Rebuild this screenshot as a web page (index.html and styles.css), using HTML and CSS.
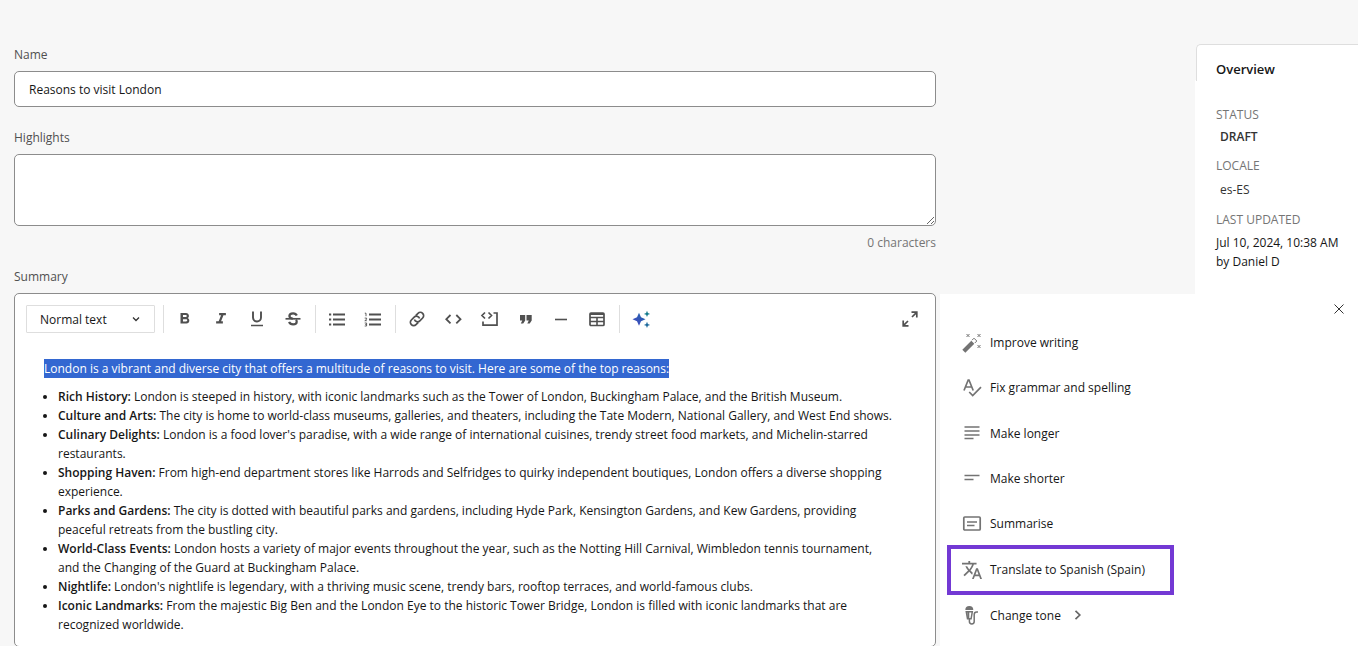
FILE: index.html
```html
<!DOCTYPE html>
<html lang="en">
<head>
<meta charset="utf-8">
<title>Reasons to visit London</title>
<link rel="stylesheet" href="styles.css">
</head>
<body>
<div class="page">
  <form class="form">
    <label class="label" for="name">Name</label>
    <input class="input" id="name" type="text" value="Reasons to visit London">
    <label class="label label-spaced" for="highlights">Highlights</label>
    <textarea class="input textarea" id="highlights"></textarea>
    <p class="counter">0 characters</p>
    <h2 class="label">Summary</h2>
    <section class="editor" aria-label="Summary">
      <div class="toolbar">
        <div class="style-picker">
          <select class="style-select" aria-label="Text style"><option>Normal text</option></select>
          <svg class="chevron" viewBox="0 0 10 10"><path d="M2 3.5l3 3 3-3"/></svg>
        </div>
        <span class="divider divider-first"></span>
        <button class="tool" type="button" aria-label="Bold"><svg class="glyph" viewBox="0 0 24 24"><path d="M15.6 10.79c.97-.67 1.65-1.77 1.65-2.79 0-2.26-1.75-4-4-4H6v14h8.04c2.09 0 3.710-1.700 3.710-3.790 0-1.520-.86-2.820-2.150-3.420zM9.300 6.800h3.700c.83 0 1.300.57 1.300 1.300s-.57 1.300-1.300 1.300H9.300zm4.200 8.500H9.300v-3h4.200c.83 0 1.500.67 1.500 1.500s-.67 1.500-1.500 1.500z"/></svg></button>
        <button class="tool" type="button" aria-label="Italic"><svg class="glyph" viewBox="0 0 24 24"><path d="M9.500 4v3h2.600l-3.200 8H5.500v3h9v-3h-2.400l3.200-8h3.200V4z"/></svg></button>
        <button class="tool" type="button" aria-label="Underline"><svg class="line" viewBox="0 0 18 18"><path d="M5 1.500v6a4 4 0 0 0 8 0v-6" stroke-width="1.900"/><path d="M3 15.500h12" stroke-width="1.500"/></svg></button>
        <button class="tool" type="button" aria-label="Strikethrough"><svg class="line" viewBox="0 0 18 18"><path d="M12.800 5.500C12.200 4 10.800 3.300 9.100 3.300c-2.200 0-3.700 1.100-3.700 2.700 0 1.300 1 2.200 3.500 2.800M12 9.800c.5.600.7 1.200.7 1.900 0 1.600-1.500 2.700-3.600 2.700-1.900 0-3.400-.9-4-2.500" stroke-width="2.200"/><path d="M1.500 8.800h15" stroke-width="1.700"/></svg></button>
        <span class="divider"></span>
        <button class="tool" type="button" aria-label="Bulleted list"><svg class="line" viewBox="0 0 18 18"><path d="M5 4.500h12M5 9.500h12M5 14.500h12" stroke-width="1.800"/><path d="M1 4.500h2.200M1 9.500h2.200M1 14.500h2.200" stroke-width="2.200"/></svg></button>
        <button class="tool" type="button" aria-label="Numbered list"><svg class="line" viewBox="0 0 18 18"><path d="M5 4.500h12M5 9.500h12M5 14.500h12" stroke-width="1.800"/><path d="M.8 3.200H2v3M.7 8.100h1.900v1.200L.8 10.700h2M.7 13h1.900v3H.7M1.300 14.500h1.200" stroke-width=".9"/></svg></button>
        <span class="divider"></span>
        <button class="tool" type="button" aria-label="Link"><svg class="line" viewBox="0 0 18 18"><g transform="rotate(-45 9 9)" stroke-width="1.700"><path d="M7.500 12.300H4.300a3.300 3.300 0 0 1 0-6.600h4a3.300 3.300 0 0 1 2.900 4.800"/><path d="M10.500 5.700h3.200a3.300 3.300 0 0 1 0 6.600h-4a3.300 3.300 0 0 1-2.900-4.800"/></g></svg></button>
        <button class="tool" type="button" aria-label="Inline code"><svg class="line" viewBox="0 0 18 18"><path d="M6.500 5L2.300 9.200l4.200 4.200M12.300 5l4.200 4.200-4.200 4.200" stroke-width="1.800"/></svg></button>
        <button class="tool" type="button" aria-label="Code block"><svg class="line" viewBox="0 0 18 18"><path d="M5 2.500L2 5.500l3 3M8.500 2.500l3 3-3 3M13.500 3H17v12.200H3v-3.700" stroke-width="1.700"/></svg></button>
        <button class="tool" type="button" aria-label="Quote"><svg class="glyph" viewBox="0 0 18 18"><path d="M4 5h5.200v5.500L7.200 13.600H4.800l1.500-3.100H4zM10.500 5h5.200v5.500l-2 3.100h-2.400l1.500-3.100h-2.300z"/></svg></button>
        <button class="tool" type="button" aria-label="Horizontal rule"><svg class="line" viewBox="0 0 18 18"><path d="M3 9.500h12" stroke-width="1.600"/></svg></button>
        <button class="tool" type="button" aria-label="Table"><svg class="line" viewBox="0 0 18 18"><rect x="2" y="3" width="14" height="12.500" rx="1" stroke-width="1.700"/><path d="M2 7.500h14M2 11.500h14M9 7.500v8" stroke-width="1.600"/><path d="M2 4h14" stroke-width="2"/></svg></button>
        <span class="divider"></span>
        <button class="tool" type="button" aria-label="AI assistant"><svg class="sparkle" viewBox="0 0 18 18"><defs><linearGradient id="spark" x1="0" y1="1" x2="1" y2="0"><stop offset="0" stop-color="#4a46c4"/><stop offset="1" stop-color="#1b66aa"/></linearGradient></defs><path fill="url(#spark)" d="M7 2.800l2 4.500 4.500 2-4.500 2-2 4.500-2-4.500-4.500-2 4.500-2z"/><path fill="#127b8c" d="M15 .8l.9 2.200 2.200.9-2.200.9-.9 2.200-.9-2.200-2.200-.9 2.200-.9z"/><path fill="#1d6a9c" d="M15 11.800l.9 2.200 2.200.9-2.200.9-.9 2.200-.9-2.200-2.200-.9 2.200-.9z"/></svg></button>
        <button class="tool tool-end" type="button" aria-label="Expand"><svg class="line" viewBox="0 0 18 18"><path d="M11 7l4.700-4.700M10.500 2.200h5.300v5.300M7 11l-4.700 4.700M2.200 10.500v5.300h5.300" stroke-width="1.700"/></svg></button>
      </div>
      <div class="content">
        <p class="intro"><mark class="selection">London is a vibrant and diverse city that offers a multitude of reasons to visit. Here are some of the top reasons:</mark></p>
        <ul class="reasons">
          <li><strong>Rich History:</strong> London is steeped in history, with iconic landmarks such as the Tower of London, Buckingham Palace, and the British Museum.</li>
          <li><strong>Culture and Arts:</strong> The city is home to world-class museums, galleries, and theaters, including the Tate Modern, National Gallery, and West End shows.</li>
          <li><strong>Culinary Delights:</strong> London is a food lover's paradise, with a wide range of international cuisines, trendy street food markets, and Michelin-starred restaurants.</li>
          <li><strong>Shopping Haven:</strong> From high-end department stores like Harrods and Selfridges to quirky independent boutiques, London offers a diverse shopping experience.</li>
          <li><strong>Parks and Gardens:</strong> The city is dotted with beautiful parks and gardens, including Hyde Park, Kensington Gardens, and Kew Gardens, providing peaceful retreats from the bustling city.</li>
          <li><strong>World-Class Events:</strong> London hosts a variety of major events throughout the year, such as the Notting Hill Carnival, Wimbledon tennis tournament, and the Changing of the Guard at Buckingham Palace.</li>
          <li><strong>Nightlife:</strong> London's nightlife is legendary, with a thriving music scene, trendy bars, rooftop terraces, and world-famous clubs.</li>
          <li><strong>Iconic Landmarks:</strong> From the majestic Big Ben and the London Eye to the historic Tower Bridge, London is filled with iconic landmarks that are recognized worldwide.</li>
        </ul>
      </div>
    </section>
  </form>
  <div class="side">
    <aside class="overview">
      <h2 class="overview-title">Overview</h2>
      <dl class="facts">
        <dt>Status</dt>
        <dd class="badge badge-strong">DRAFT</dd>
        <dt>Locale</dt>
        <dd class="badge">es-ES</dd>
        <dt>Last updated</dt>
        <dd>Jul 10, 2024, 10:38 AM<br>by Daniel D</dd>
      </dl>
    </aside>
    <section class="assistant" aria-label="AI assistant">
      <ul class="actions">
        <li><button class="action" type="button"><svg class="icon" viewBox="0 0 20 20"><path d="M1.800 18.200l9-9" stroke-width="4.200"/><path d="M10 7.200l2-2 2.800 2.800-2 2" stroke-width="1"/><path d="M4.500 1l3 3M7.500 1l-3 3M15.500 1l3 3M18.500 1l-3 3M15.500 12l3 3M18.500 12l-3 3" stroke-width="1"/></svg>Improve writing</button></li>
        <li><button class="action" type="button"><svg class="icon" viewBox="0 0 20 20"><path d="M2 12.500L6.200 2h.8l4.200 10.500M3.500 9h6.200M7.200 14l3.500 3.500 8.300-8.300" stroke-width="1.700"/></svg>Fix grammar and spelling</button></li>
        <li><button class="action" type="button"><svg class="icon" viewBox="0 0 20 20"><path d="M2.500 4h15M2.500 8h15M2.500 12h15M2.500 15.500h9" stroke-width="1.700"/></svg>Make longer</button></li>
        <li><button class="action" type="button"><svg class="icon" viewBox="0 0 20 20"><path d="M2.500 6.500h15M2.500 10.500h9" stroke-width="1.700"/></svg>Make shorter</button></li>
        <li><button class="action" type="button"><svg class="icon" viewBox="0 0 20 20"><rect x="1.800" y="3" width="16.400" height="13" rx="1" stroke-width="1.700"/><path d="M5 8h10M5 11.500h7.500" stroke-width="1.500"/></svg>Summarise</button></li>
        <li><button class="action action-active" type="button"><svg class="icon icon-solid" viewBox="1 2 22 20"><path d="M12.870 15.070l-2.540-2.510.03-.03c1.740-1.940 2.980-4.170 3.710-6.530H17V4h-7V2H8v2H1v1.990h11.170C11.500 7.920 10.440 9.750 9 11.350 8.070 10.320 7.300 9.190 6.690 8h-2c.73 1.630 1.730 3.170 2.980 4.560l-5.090 5.020L4 19l5-5 3.110 3.110.76-2.040zM18.500 10h-2L12 22h2l1.120-3h4.750L21 22h2l-4.500-12zm-2.620 7l1.620-4.330L19.120 17h-3.240z"/></svg>Translate to Spanish (Spain)</button></li>
        <li><button class="action" type="button"><svg class="icon" viewBox="0 0 20 20"><path d="M3.300 5a4 4 0 0 1 8 0z" fill="#737373" stroke="none"/><path d="M4.300 6.800h6l-1.200 7H5.500z" stroke-width="1.500"/><path d="M6.300 7v6" stroke-width="2"/><path d="M7.400 14v2.500a2.400 2.400 0 0 0 4.800 0V9.500a2.500 2.500 0 0 1 2.500-2.500H16" stroke-width="1.500"/></svg>Change tone<svg class="arrow" viewBox="0 0 10 10"><path d="M2.500.8L6.800 5 2.500 9.200"/></svg></button></li>
      </ul>
      <button class="close" type="button" aria-label="Close"><svg class="cross" viewBox="0 0 10 10"><path d="M.5.5l9 9M9.500.5l-9 9"/></svg></button>
    </section>
  </div>
</div>
</body>
</html>
```
FILE: styles.css
```css
* { box-sizing: border-box; }

body {
  margin: 0;
  overflow: hidden;
  background: #f7f7f7;
  color: #161616;
  font: 12px/19px "Segoe UI", "Open Sans", "Noto Sans", sans-serif;
}

button, input, textarea, select { font: inherit; color: inherit; }
h2, p, ul, dl, dd { margin: 0; padding: 0; }
button { border: 0; padding: 0; background: none; }
svg { flex: none; }

.page {
  display: grid;
  grid-template-columns: minmax(0, 1fr) 418px;
  gap: 4px;
  height: 100vh;
  padding-left: 14px;
}

/* Form column */
.form {
  display: flex;
  flex-direction: column;
  min-height: 0;
  padding-top: 45px;
}
.label {
  margin-bottom: 7px;
  color: #505050;
  font-size: 12px;
  font-weight: 400;
}
.label-spaced { margin-top: 21px; }
.input {
  flex: none;
  width: 100%;
  height: 36px;
  padding: 0 14px;
  border: 1px solid #8c8c8c;
  border-radius: 5px;
  background: #fff;
}
.textarea { height: 72px; padding: 8px 14px; }
.counter {
  margin: 7px 0 15px;
  color: #757575;
  text-align: right;
}

/* Rich text editor */
.editor {
  flex: none;
  padding: 11px 11px 12px;
  border: 1px solid #8c8c8c;
  border-radius: 5px;
  background: #fff;
}
.toolbar { display: flex; align-items: center; height: 28px; }
.style-picker { display: grid; align-items: center; width: 129px; }
.style-select {
  grid-area: 1 / 1;
  width: 100%;
  height: 28px;
  padding: 0 13px;
  border: 1px solid #dedede;
  border-radius: 1px;
  background: #fff;
  appearance: none;
}
.chevron {
  grid-area: 1 / 1;
  justify-self: end;
  width: 10px;
  height: 10px;
  margin-right: 14px;
  fill: none;
  stroke: #333;
  stroke-width: 1.3;
  pointer-events: none;
}
.divider { width: 1px; height: 28px; margin: 0 3px 0 4px; background: #dedede; }
.divider-first { margin-left: 8px; }
.tool {
  display: grid;
  place-items: center;
  width: 36px;
  height: 28px;
}
.tool svg { width: 18px; height: 18px; overflow: visible; }
.tool-end { margin-left: auto; margin-right: -4px; }
.glyph { fill: #505050; }
.line { fill: none; stroke: #505050; }
.content { padding: 26px 30px 0 18px; }
.selection { display: inline-block; background: #3367d1; color: #fff; }
.reasons { margin-top: 9px; padding-left: 14px; }
.reasons strong { font-weight: 600; }

/* Right column */
.side { display: flex; flex-direction: column; min-height: 0; padding-top: 44px; }
.overview {
  align-self: flex-end;
  width: 163px;
  height: 250px;
  background: linear-gradient(#fff, #fff) 0 36px no-repeat;
}
.overview-title {
  margin-left: 1px;
  padding: 15px 0 2px 19px;
  border: 1px solid #dedede;
  border-width: 1px 0 0 1px;
  border-radius: 5px 0 0 0;
  background: #fff;
  font-size: 13px;
  font-weight: 600;
}
.facts { padding: 24px 0 0 21px; }
.facts dt { color: #757575; text-transform: uppercase; }
.facts dd { margin: 4px 0 0; white-space: nowrap; }
.facts .badge { margin: 5px 0 11px; padding-left: 4px; color: #333; }
.facts .badge-strong { margin: 3px 0 10px; font-size: 12px; font-weight: 600; }

/* Assistant menu */
.assistant {
  display: flex;
  flex: 1;
  justify-content: space-between;
  align-items: stretch;
  min-height: 0;
  padding: 0 9px 0 7px;
  background: #fff;
}
.actions {
  display: grid;
  grid-auto-rows: 1fr;
  align-items: center;
  width: 227px;
  padding: 26px 0 8px;
  list-style: none;
}
.action {
  display: flex;
  align-items: center;
  gap: 8px;
  width: 100%;
  height: 45px;
  padding: 0 11px;
  border: 0 solid transparent;
  border-width: 0 4px;
  white-space: nowrap;
}
.action-active { height: 50px; margin: -2px 0; border: 4px solid #7339d4; }
.icon { width: 20px; height: 20px; fill: none; stroke: #737373; }
.icon-solid { fill: #737373; stroke: none; }
.arrow { width: 10px; height: 10px; margin-left: 4px; fill: none; stroke: #666; stroke-width: 1.7; }
.close {
  display: grid;
  place-items: center;
  width: 20px;
  height: 20px;
  margin-top: 5px;
}
.cross { width: 10px; height: 10px; stroke: #333; stroke-width: 1; }
```
